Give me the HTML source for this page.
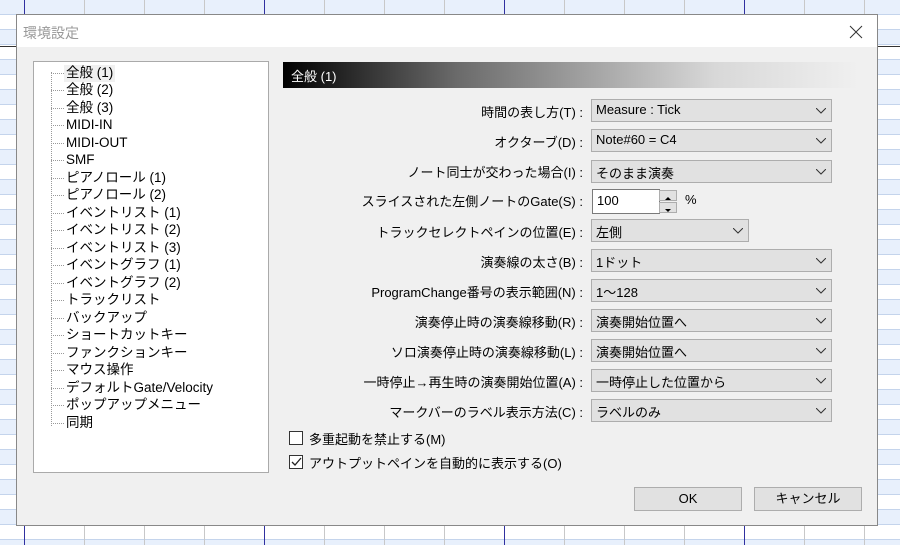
<!DOCTYPE html>
<html><head><meta charset="utf-8"><style>
*{margin:0;padding:0;box-sizing:border-box}
body{width:900px;height:545px;overflow:hidden;position:relative;font-family:"Liberation Sans","Noto Sans CJK JP",sans-serif;font-size:13px;color:#000;
background:
repeating-linear-gradient(90deg,transparent 0 24px,#c8c8c8 24px 25px,transparent 25px 60px),
repeating-linear-gradient(180deg,#e8f0fc 0 14px,#c4d4ec 14px 15px,#fff 15px 29px,#c4d4ec 29px 30px);}
.vd{position:absolute;top:0;width:1px;height:545px;background:#3030a0}
.hd{position:absolute;left:0;width:900px;height:1px;background:#333;top:46px}
#dlg{position:absolute;left:16px;top:14px;width:862px;height:512px;background:#f0f0f0;border:1px solid #888}
#title{position:absolute;left:0;top:0;width:860px;height:32px;background:#fff;color:#999;font-size:14px;padding:8px 0 0 6px}
.a{position:absolute;white-space:nowrap}
#tree{position:absolute;left:16px;top:46px;width:236px;height:412px;background:#fff;border:1px solid #aaa}
.ti{position:absolute;left:32px;line-height:16px;height:17px;font-size:13.5px}
.tl{position:absolute;left:17px;width:13px;border-top:1px dotted #999}
#vl{position:absolute;left:17px;top:10px;height:354px;border-left:1px dotted #999}
#hdr{position:absolute;left:266px;top:47px;width:576px;height:26px;background:linear-gradient(90deg,#000 0,#6a6a6a 30%,#d8d8d8 75%,#f0f0f0 100%);color:#fff;font-size:13px;padding:4px 0 0 8px}
.lb{position:absolute;right:294px;text-align:right;white-space:nowrap}
.cb{position:absolute;left:574px;width:241px;height:23px;background:#e1e1e1;border:1px solid #adadad;padding:2px 0 0 4px}
.cb svg{position:absolute;right:5px;top:8px}
.btn{position:absolute;top:472px;height:24px;background:#e1e1e1;border:1px solid #adadad;text-align:center;line-height:22px}
.chk{position:absolute;left:272px;width:14px;height:14px;border:1px solid #333;background:#fff}
</style></head><body>
<div class="vd" style="left:24px"></div><div class="vd" style="left:264px"></div><div class="vd" style="left:504px"></div><div class="vd" style="left:744px"></div>
<div class="hd"></div>
<div id="dlg">
<div id="title">環境設定</div>
<svg class="a" style="left:832px;top:10px" width="14" height="14"><path d="M1 1L13 13M13 1L1 13" stroke="#333" stroke-width="1"/></svg>
<div id="tree">
<div id="vl"></div>
<div class="tl" style="top:11px"></div><div class="ti" style="top:3px;background:#f0f0f0;padding:0 2px;left:30px">全般 (1)</div>
<div class="tl" style="top:28px"></div><div class="ti" style="top:20px">全般 (2)</div>
<div class="tl" style="top:46px"></div><div class="ti" style="top:38px">全般 (3)</div>
<div class="tl" style="top:63px"></div><div class="ti" style="top:55px">MIDI-IN</div>
<div class="tl" style="top:81px"></div><div class="ti" style="top:73px">MIDI-OUT</div>
<div class="tl" style="top:98px"></div><div class="ti" style="top:90px">SMF</div>
<div class="tl" style="top:116px"></div><div class="ti" style="top:108px">ピアノロール (1)</div>
<div class="tl" style="top:133px"></div><div class="ti" style="top:125px">ピアノロール (2)</div>
<div class="tl" style="top:151px"></div><div class="ti" style="top:143px">イベントリスト (1)</div>
<div class="tl" style="top:168px"></div><div class="ti" style="top:160px">イベントリスト (2)</div>
<div class="tl" style="top:186px"></div><div class="ti" style="top:178px">イベントリスト (3)</div>
<div class="tl" style="top:203px"></div><div class="ti" style="top:195px">イベントグラフ (1)</div>
<div class="tl" style="top:221px"></div><div class="ti" style="top:213px">イベントグラフ (2)</div>
<div class="tl" style="top:238px"></div><div class="ti" style="top:230px">トラックリスト</div>
<div class="tl" style="top:256px"></div><div class="ti" style="top:248px">バックアップ</div>
<div class="tl" style="top:273px"></div><div class="ti" style="top:265px">ショートカットキー</div>
<div class="tl" style="top:291px"></div><div class="ti" style="top:283px">ファンクションキー</div>
<div class="tl" style="top:308px"></div><div class="ti" style="top:300px">マウス操作</div>
<div class="tl" style="top:326px"></div><div class="ti" style="top:318px">デフォルトGate/Velocity</div>
<div class="tl" style="top:343px"></div><div class="ti" style="top:335px">ポップアップメニュー</div>
<div class="tl" style="top:361px"></div><div class="ti" style="top:353px">同期</div>
</div>
<div id="hdr">全般 (1)</div>

<div class="lb" style="top:87px">時間の表し方(T) :</div>
<div class="cb" style="top:84px">Measure : Tick<svg width="10" height="6"><path d="M0 0L5 5L10 0" fill="none" stroke="#333"/></svg></div>
<div class="lb" style="top:117px">オクターブ(D) :</div>
<div class="cb" style="top:114px">Note#60 = C4<svg width="10" height="6"><path d="M0 0L5 5L10 0" fill="none" stroke="#333"/></svg></div>
<div class="lb" style="top:147px">ノート同士が交わった場合(I) :</div>
<div class="cb" style="top:145px">そのまま演奏<svg width="10" height="6"><path d="M0 0L5 5L10 0" fill="none" stroke="#333"/></svg></div>
<div class="lb" style="top:176px">スライスされた左側ノートのGate(S) :</div>
<div class="a" style="left:575px;top:174px;width:68px;height:25px;background:#fff;border:1px solid #7a7a7a;padding:3px 0 0 4px">100</div>
<div class="a" style="left:642px;top:175px;width:18px;height:11px;background:#e1e1e1;border:1px solid #adadad"><svg width="16" height="9"><path d="M5 6L8 3L11 6Z" fill="#000"/></svg></div>
<div class="a" style="left:642px;top:187px;width:18px;height:11px;background:#e1e1e1;border:1px solid #adadad"><svg width="16" height="9"><path d="M5 3L8 6L11 3Z" fill="#000"/></svg></div>
<div class="a" style="left:668px;top:177px">%</div>
<div class="lb" style="top:207px">トラックセレクトペインの位置(E) :</div>
<div class="cb" style="top:204px;width:158px">左側<svg width="10" height="6"><path d="M0 0L5 5L10 0" fill="none" stroke="#333"/></svg></div>
<div class="lb" style="top:237px">演奏線の太さ(B) :</div>
<div class="cb" style="top:234px">1ドット<svg width="10" height="6"><path d="M0 0L5 5L10 0" fill="none" stroke="#333"/></svg></div>
<div class="lb" style="top:267px">ProgramChange番号の表示範囲(N) :</div>
<div class="cb" style="top:264px">1～128<svg width="10" height="6"><path d="M0 0L5 5L10 0" fill="none" stroke="#333"/></svg></div>
<div class="lb" style="top:297px">演奏停止時の演奏線移動(R) :</div>
<div class="cb" style="top:294px">演奏開始位置へ<svg width="10" height="6"><path d="M0 0L5 5L10 0" fill="none" stroke="#333"/></svg></div>
<div class="lb" style="top:327px">ソロ演奏停止時の演奏線移動(L) :</div>
<div class="cb" style="top:324px">演奏開始位置へ<svg width="10" height="6"><path d="M0 0L5 5L10 0" fill="none" stroke="#333"/></svg></div>
<div class="lb" style="top:357px">一時停止→再生時の演奏開始位置(A) :</div>
<div class="cb" style="top:354px">一時停止した位置から<svg width="10" height="6"><path d="M0 0L5 5L10 0" fill="none" stroke="#333"/></svg></div>
<div class="lb" style="top:387px">マークバーのラベル表示方法(C) :</div>
<div class="cb" style="top:384px">ラベルのみ<svg width="10" height="6"><path d="M0 0L5 5L10 0" fill="none" stroke="#333"/></svg></div>

<div class="chk" style="top:416px"></div><div class="a" style="left:292px;top:414px">多重起動を禁止する(M)</div>
<div class="chk" style="top:440px"><svg width="12" height="12" style="position:absolute;left:0;top:0"><path d="M2 6L5 9L11 2" fill="none" stroke="#222" stroke-width="1.3"/></svg></div><div class="a" style="left:292px;top:438px">アウトプットペインを自動的に表示する(O)</div>

<div class="btn" style="left:617px;width:108px">OK</div>
<div class="btn" style="left:737px;width:108px">キャンセル</div>
</div>
</body></html>
